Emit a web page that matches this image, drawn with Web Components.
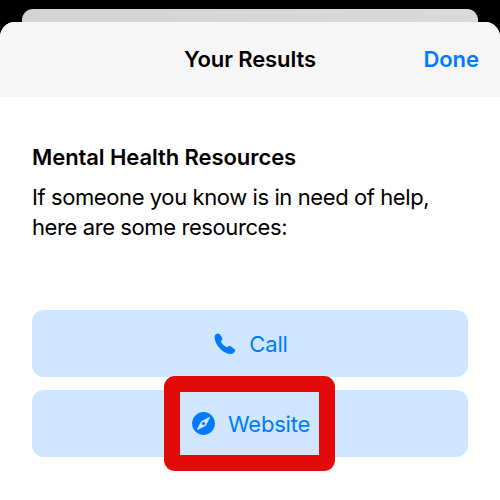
<!DOCTYPE html>
<html lang="en">
<head>
<meta charset="utf-8">
<title>Your Results</title>
<style>
    body {
        margin: 0;
        height: 500px;
        overflow: hidden;
        background: #000;
        font-family: Inter, "Liberation Sans", sans-serif;
        color: #000;
    }
</style>
</head>
<body>
<modal-sheet>
    <sheet-header slot="header">
        Your Results
        <span slot="action">Done</span>
    </sheet-header>
    <resource-section>
        <span slot="title">Mental Health Resources</span>
        If someone you know is in need of help,<br>here are some resources:
    </resource-section>
    <action-list>
        <action-button icon="phone" style="--label-spacing: -0.1px">Call</action-button>
        <action-button icon="compass" highlighted>Website</action-button>
    </action-list>
</modal-sheet>

<script>
const ICONS = {
    phone: `<svg width="22" height="22" viewBox="0 0 22 22">
        <path fill="currentColor" d="M.6 4.6C.5 3.3 1.1 2 2.3 1.1C3.5.1 4.9.2 5.8 1.3L8 4.6C8.6 5.6 8.5 6.5 7.8 7.3L7.2 8C6.9 8.4 6.9 8.8 7.2 9.3C8.4 11.2 10.2 12.9 12.2 14.1C12.7 14.4 13.1 14.4 13.5 14.1L14.2 13.5C15 12.8 15.9 12.8 16.8 13.4L20.1 15.7C21.4 16.6 21.5 17.9 20.5 19.1C19.6 20.3 18.3 21 16.9 21C13.2 21 9.2 18.8 6.1 15.7C2.9 12.5.7 8.3.6 4.6Z"/>
    </svg>`,
    compass: `<svg width="23" height="23" viewBox="0 0 23 23">
        <circle cx="11.5" cy="11.5" r="11.4" fill="currentColor"/>
        <path fill="#d0e6ff" d="M16.9 5.2C17.6 4.9 18.1 5.4 17.8 6.1L14.1 13.2Q13.8 13.8 13.2 14.1L6.1 17.8C5.4 18.1 4.9 17.6 5.2 16.9L8.9 9.8Q9.2 9.2 9.8 8.9Z"/>
        <circle cx="11.5" cy="11.5" r="1.6" fill="currentColor"/>
    </svg>`
};

class ModalSheet extends HTMLElement {
    constructor() {
        super();
        this.attachShadow({ mode: 'open' });
        this.shadowRoot.innerHTML = `
            <style>
                :host {
                    display: block;
                    padding-top: 9px;
                }
                .behind {
                    height: 13px;
                    margin: 0 22px;
                    background: linear-gradient(90deg, #d3d3d3, #dadadc);
                    border-radius: 11px 11px 0 0;
                }
                .sheet {
                    height: 478px;
                    background: #fff;
                    border-radius: 15px 15px 0 0;
                    overflow: hidden;
                }
                /* the previous sheet shows only above this one */
                .corners {
                    background: linear-gradient(90deg, #000 22px, #d8d8d9 22px 478px, #000 478px);
                }
            </style>
            <div class="behind"></div>
            <div class="corners">
                <div class="sheet">
                    <slot name="header"></slot>
                    <slot></slot>
                </div>
            </div>
        `;
    }
}

class SheetHeader extends HTMLElement {
    constructor() {
        super();
        this.attachShadow({ mode: 'open' });
        this.shadowRoot.innerHTML = `
            <style>
                :host {
                    display: grid;
                    grid-template-columns: 1fr auto 1fr;
                    align-items: center;
                    height: 75px;
                    padding: 0 21px 2px;
                    box-sizing: border-box;
                    background: #f6f6f6;
                    font-size: 22px;
                    font-weight: 600;
                    line-height: 28px;
                    white-space: nowrap;
                }
                .title {
                    grid-column: 2;
                    letter-spacing: -0.1px;
                }
                .action {
                    justify-self: end;
                    color: #007aff;
                    letter-spacing: -0.05px;
                }
            </style>
            <div class="title"><slot></slot></div>
            <div class="action"><slot name="action"></slot></div>
        `;
    }
}

class ResourceSection extends HTMLElement {
    constructor() {
        super();
        this.attachShadow({ mode: 'open' });
        this.shadowRoot.innerHTML = `
            <style>
                :host {
                    display: block;
                    padding: 45px 32px 0;
                }
                h2 {
                    margin: 0 0 11px;
                    font-size: 22px;
                    font-weight: 600;
                    line-height: 30px;
                    letter-spacing: -0.08px;
                }
                p {
                    margin: 0;
                    font-size: 22px;
                    line-height: 29.5px;
                    letter-spacing: -0.41px;
                    white-space: nowrap;
                }
            </style>
            <h2><slot name="title"></slot></h2>
            <p><slot></slot></p>
        `;
    }
}

class ActionList extends HTMLElement {
    constructor() {
        super();
        this.attachShadow({ mode: 'open' });
        this.shadowRoot.innerHTML = `
            <style>
                :host {
                    display: flex;
                    flex-direction: column;
                    gap: 13px;
                    padding: 68px 32px 0;
                }
            </style>
            <slot></slot>
        `;
    }
}

class ActionButton extends HTMLElement {
    constructor() {
        super();
        this.attachShadow({ mode: 'open' });
        this.shadowRoot.innerHTML = `
            <style>
                :host {
                    display: flex;
                    position: relative;
                    align-items: center;
                    justify-content: center;
                    gap: 13px;
                    height: 67px;
                    padding-left: 2px;
                    border-radius: 12px;
                    background: #d0e6ff;
                    color: #007aff;
                    font-size: 22px;
                    line-height: 28px;
                    letter-spacing: var(--label-spacing, -0.2px);
                }
                svg {
                    display: block;
                }
                /* red frame drawn over the button */
                :host([highlighted])::after {
                    content: "";
                    position: absolute;
                    left: 132.4px;
                    top: -14px;
                    width: 139px;
                    height: 63px;
                    border: 16px solid #e20a08;
                    border-radius: 11px;
                }
            </style>
            ${ICONS[this.getAttribute('icon')] || ''}
            <span><slot></slot></span>
        `;
    }
}

customElements.define('modal-sheet', ModalSheet);
customElements.define('sheet-header', SheetHeader);
customElements.define('resource-section', ResourceSection);
customElements.define('action-list', ActionList);
customElements.define('action-button', ActionButton);
</script>
</body>
</html>
